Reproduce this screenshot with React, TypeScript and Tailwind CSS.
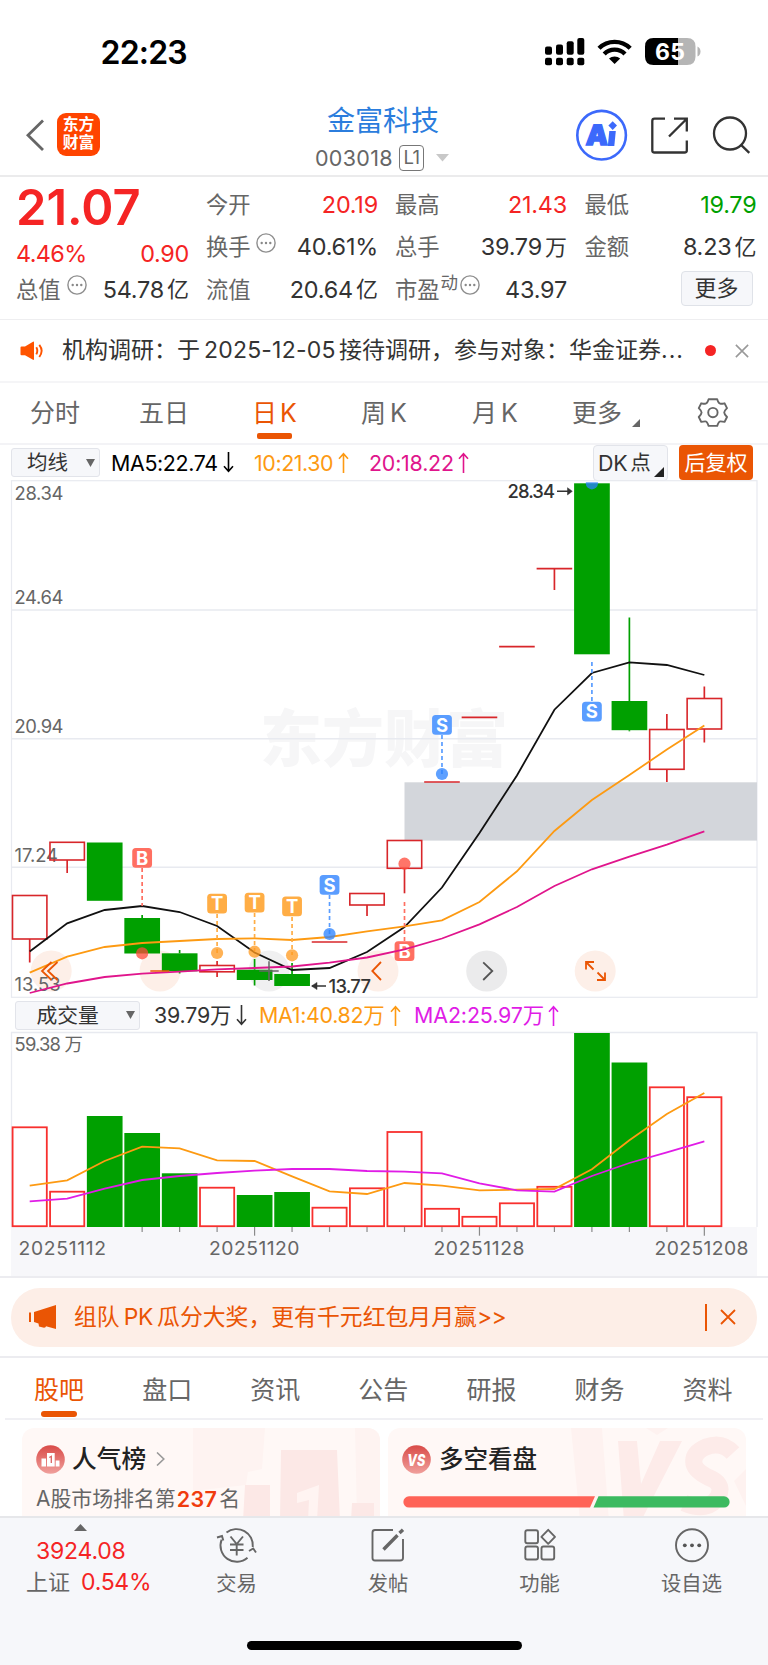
import type { ReactNode } from "react";

const step = 37.48;
const cx = (i: number) => 29.7 + step * i;

type Candle = { up: boolean; top: number; bottom: number; high?: number; low?: number };

const candles: Candle[] = [
  { up: true, top: 895.5, bottom: 939, low: 962.5 },
  { up: true, top: 842.3, bottom: 860, low: 873 },
  { up: false, top: 842.5, bottom: 900.8 },
  { up: false, top: 918, bottom: 953.5, high: 915 },
  { up: false, top: 953.3, bottom: 971.3, high: 950, low: 973.5 },
  { up: true, top: 965.5, bottom: 971.8, high: 961, low: 977 },
  { up: false, top: 969.7, bottom: 980, high: 959, low: 985.5 },
  { up: false, top: 974, bottom: 986, high: 963 },
  { up: true, top: 942, bottom: 942 },
  { up: true, top: 893.5, bottom: 905, low: 916 },
  { up: true, top: 840.5, bottom: 868.3, low: 893.3 },
  { up: true, top: 782, bottom: 782 },
  { up: true, top: 717.3, bottom: 717.3 },
  { up: true, top: 646.7, bottom: 646.7 },
  { up: true, top: 568.7, bottom: 568.7, low: 590 },
  { up: false, top: 483.3, bottom: 654.3 },
  { up: false, top: 701, bottom: 730.2, high: 617.5, low: 731.3 },
  { up: true, top: 729.5, bottom: 769.3, high: 714, low: 782 },
  { up: true, top: 698.5, bottom: 729, high: 686.5, low: 742.5 },
];

const ma5 = [951.5, 923.3, 910, 906, 912, 926, 952.5, 970, 968, 952, 927, 887.5, 833, 775.5, 709.7, 673, 662.3, 665, 675];
const ma10 = [972.7, 956.7, 947, 943, 941, 939, 938.3, 940, 937, 931.3, 926.3, 920.3, 902, 871.3, 831, 800, 775, 749.5, 725.5];
const ma20 = [993, 983.5, 977, 973.7, 971.7, 969.3, 968, 966.5, 962.7, 957.5, 949.3, 938.5, 924.3, 907, 886, 869.3, 856.7, 844.7, 831.3];

const volumes: { up: boolean; top: number }[] = [
  { up: true, top: 1127.3 },
  { up: true, top: 1191.7 },
  { up: false, top: 1116 },
  { up: false, top: 1133 },
  { up: false, top: 1173.3 },
  { up: true, top: 1187.7 },
  { up: false, top: 1195 },
  { up: false, top: 1192 },
  { up: true, top: 1207.7 },
  { up: true, top: 1188.3 },
  { up: true, top: 1132 },
  { up: true, top: 1208.8 },
  { up: true, top: 1216.8 },
  { up: true, top: 1203.3 },
  { up: true, top: 1186.8 },
  { up: false, top: 1033 },
  { up: false, top: 1062.5 },
  { up: true, top: 1087.3 },
  { up: true, top: 1097.2 },
];
const vma1 = [1185.7, 1180.3, 1161, 1146.7, 1148.3, 1160.3, 1161, 1176.3, 1191.3, 1194, 1183, 1185.7, 1190.3, 1189.7, 1189, 1169.3, 1140.3, 1114, 1093];
const vma2 = [1201.3, 1198.7, 1188.7, 1180, 1176, 1173, 1170.7, 1169, 1169, 1171, 1171.7, 1173.3, 1183.3, 1190.3, 1191.7, 1176, 1163, 1152.3, 1141.3];

const points = (ys: number[]) => ys.map((y, i) => `${cx(i)},${y}`).join(" ");

type Mark = { i: number; letter: string; color: string; box: number; from: number; to: number; dot: number };
const RED = "#ff6f61";
const BLUE = "#5a9dff";
const AMBER = "#ffad45";
const marks: Mark[] = [
  { i: 3, letter: "B", color: RED, box: 848, from: 868, to: 906, dot: 953.3 },
  { i: 5, letter: "T", color: AMBER, box: 893.8, from: 914, to: 953, dot: 953 },
  { i: 6, letter: "T", color: AMBER, box: 892.7, from: 913, to: 951.5, dot: 951.7 },
  { i: 7, letter: "T", color: AMBER, box: 896.5, from: 917, to: 955, dot: 955.3 },
  { i: 8, letter: "S", color: BLUE, box: 875, from: 895, to: 934, dot: 934 },
  { i: 11, letter: "S", color: BLUE, box: 715, from: 735, to: 774, dot: 774 },
  { i: 15, letter: "S", color: BLUE, box: 701.7, from: 662, to: 701, dot: 483.3 },
  { i: 10, letter: "B", color: RED, box: 941.3, from: 902, to: 941, dot: 863.7 },
];

function PriceChart() {
  return (
    <svg className="block h-[520px] w-[768px] shrink-0" viewBox="0 480 768 520">
      <defs>
        <clipPath id="plot">
          <rect x="12" y="482.3" width="745" height="515" />
        </clipPath>
      </defs>
      <text x="260" y="762" fontSize="62" fontWeight="900" fill="#f6f6f7" textLength="248">东方财富</text>
      <g stroke="#e8eaf0" strokeWidth="1.5" fill="none">
        <rect x="11.5" y="480.7" width="745.5" height="516.6" strokeWidth="1.2" />
        <path d="M12 610H757M12 738.7H757M12 867.3H757" />
      </g>
      <rect x="404.5" y="782.3" width="352.5" height="58.3" fill="#d3d6db" />
      <g fill="#fdefe8">
        <circle cx="51.2" cy="971" r="20.5" />
        <circle cx="160" cy="971" r="20.5" />
        <circle cx="378" cy="971" r="20.5" />
        <circle cx="595.2" cy="971" r="20.5" />
      </g>
      <g fill="#ebebec">
        <circle cx="269" cy="971" r="20.5" fill="#f0f0f1" />
        <circle cx="486.7" cy="971" r="20.5" />
      </g>
      <g fill="#666" fontSize="18.4">
        <text x="14.5" y="500" textLength="49">28.34</text>
        <text x="14.5" y="604.2" textLength="49">24.64</text>
        <text x="14.5" y="733.2" textLength="49">20.94</text>
        <text x="14.5" y="862" textLength="43.5">17.24</text>
        <text x="14.5" y="991.2" textLength="46">13.53</text>
      </g>
      {candles.map((c, i) => {
        const color = c.up ? "#d8262a" : "#00a000";
        return (
          <g key={i} stroke={color} strokeWidth="1.7">
            {c.high !== undefined && <line x1={cx(i)} x2={cx(i)} y1={c.high} y2={c.top} />}
            {c.low !== undefined && <line x1={cx(i)} x2={cx(i)} y1={c.bottom} y2={c.low} />}
            {c.top === c.bottom ? (
              <line x1={cx(i) - 17.8} x2={cx(i) + 17.8} y1={c.top} y2={c.top} />
            ) : c.up ? (
              <rect x={cx(i) - 17.2} y={c.top} width="34.4" height={c.bottom - c.top} fill="none" strokeWidth="1.6" />
            ) : (
              <rect x={cx(i) - 17.8} y={c.top} width="35.7" height={c.bottom - c.top} fill={color} stroke="none" />
            )}
          </g>
        );
      })}
      <g fill="none" strokeWidth="1.8">
        <polyline points={points(ma5)} stroke="#111" />
        <polyline points={points(ma10)} stroke="#fd9a12" />
      </g>
      <g clipPath="url(#plot)">
        {marks.map((m) => (
          <g key={m.i}>
            <line x1={cx(m.i)} x2={cx(m.i)} y1={m.from} y2={m.to} stroke={m.color} strokeWidth="1.7" strokeDasharray="4 3" />
            <circle cx={cx(m.i)} cy={m.dot} r="6.1" fill={m.letter === "S" ? "#2b82ff" : m.letter === "T" ? "#ff9a1f" : "#ff4a3a"} opacity="0.76" />
            <rect x={cx(m.i) - 9.9} y={m.box} width="19.8" height="19.8" rx="3.5" fill={m.color} />
            <text x={cx(m.i)} y={m.box + 16.6} fontSize="18.5" fontWeight="700" fill="#fff" textAnchor="middle">
              {m.letter}
            </text>
          </g>
        ))}
      </g>
      <polyline points={points(ma20)} stroke="#e0158c" fill="none" strokeWidth="1.8" />
      <g fill="#333" fontSize="18.4" fontWeight="500">
        <text x="507.5" y="498.2" textLength="47.5">28.34</text>
        <text x="328.5" y="992.5" textLength="42.5">13.77</text>
      </g>
      <g fill="none" stroke="#333" strokeWidth="1.6">
        <path d="M557 491.3H571M312 986H326" />
        <path d="M567.5 487.7L572.3 491.3L567.5 494.9ZM317 982.4L311.5 986L317 989.6Z" fill="#333" strokeWidth="0.5" />
      </g>
      <g fill="none" stroke="#ea5504" strokeWidth="1.8">
        <path d="M51.5 962L42 971L51.5 980M57.5 962L48 971L57.5 980" />
        <path d="M150.3 971H169.3" strokeWidth="1.5" />
        <path d="M381 962L372.3 971L381 980" />
        <path d="M586 969.5V962H594M586 962L593.5 969.5M605 972.5V980H597M605 980L597.5 972.5" />
      </g>
      <path d="M259.3 971H278.7M269 961.3V981" stroke="#666" strokeWidth="1.5" fill="none" />
      <path d="M483.2 962.3L492.3 971L483.2 980" stroke="#555" strokeWidth="1.8" fill="none" />
    </svg>
  );
}

function VolumeChart() {
  return (
    <svg className="block h-[245px] w-[768px] shrink-0" viewBox="0 1031 768 245">
      <rect x="11" y="1227" width="746" height="50" fill="#f7f7fa" />
      <path d="M11.5 1227V1032.5H757V1227" stroke="#e8eaf0" strokeWidth="1.3" fill="none" />
      <text x="14.5" y="1050.5" fontSize="18.4" fill="#666" textLength="68.5">59.38 万</text>
      {volumes.map((v, i) =>
        v.up ? (
          <rect key={i} x={cx(i) - 17.1} y={v.top} width="34.2" height={1226.2 - v.top} fill="#fff" stroke="#f8302e" strokeWidth="1.8" />
        ) : (
          <rect key={i} x={cx(i) - 17.8} y={v.top} width="35.7" height={1227 - v.top} fill="#00a000" />
        ),
      )}
      <g fill="none" strokeWidth="1.8">
        <polyline points={points(vma1)} stroke="#fd9a12" />
        <polyline points={points(vma2)} stroke="#e01ce6" />
      </g>
      {volumes.map((_, i) =>
        i > 2 ? (
          <line key={i} x1={cx(i)} x2={cx(i)} y1="1227" y2={i % 6 === 0 ? 1235.7 : 1232} stroke="#8a8a8a" strokeWidth="1.2" />
        ) : null,
      )}
      <g fill="#666" fontSize="19.3">
        <text x="18.5" y="1255.3" textLength="87.5">20251112</text>
        <text x="209" y="1255.3" textLength="90.5">20251120</text>
        <text x="433.5" y="1255.3" textLength="91">20251128</text>
        <text x="654.5" y="1255.3" textLength="94">20251208</text>
      </g>
    </svg>
  );
}

function Dots() {
  return (
    <svg className="block size-5 shrink-0" viewBox="0 0 20 20">
      <circle cx="10" cy="10" r="9.1" fill="none" stroke="#8e8e8e" strokeWidth="1.4" />
      <g fill="#888">
        <circle cx="5.7" cy="10" r="1.2" />
        <circle cx="10" cy="10" r="1.2" />
        <circle cx="14.3" cy="10" r="1.2" />
      </g>
    </svg>
  );
}

function Cross({ className }: { className: string }) {
  return (
    <svg className={className} viewBox="0 0 16 16">
      <path d="M1 1L15 15M15 1L1 15" stroke="currentColor" strokeWidth="1.8" fill="none" />
    </svg>
  );
}

function Field({ label, extra, children, color = "text-[#333]" }: { label: string; extra?: ReactNode; children: ReactNode; color?: string }) {
  return (
    <div className="flex h-full items-center whitespace-nowrap">
      <span className="text-[22.3px] text-[#666]">{label}</span>
      {extra}
      <span className={`ml-auto flex items-center gap-[3px] text-[23.4px] tracking-[-0.2px] ${color}`}>{children}</span>
    </div>
  );
}

const Cn = ({ children }: { children: ReactNode }) => <span className="text-[22px] tracking-normal">{children}</span>;

function StatusBar() {
  return (
    <div className="flex h-[96px] items-start">
      <div className="ml-[100.5px] mt-[33px] w-[444.5px] text-[32px] font-semibold leading-[40px] tracking-[-0.8px] text-black">22:23</div>
      <svg className="mt-[36px] h-[32px] w-[160px]" viewBox="545 36 160 32">
        <g fill="#000">
          <rect x="545" y="46.5" width="7" height="8.2" rx="2" />
          <rect x="556" y="44.5" width="7" height="10.2" rx="2" />
          <rect x="566.7" y="41.3" width="7" height="13.4" rx="2" />
          <rect x="577.3" y="38" width="7" height="16.7" rx="2" />
          <rect x="545" y="57.7" width="7" height="7.5" rx="2" />
          <rect x="556" y="57.7" width="7" height="7.5" rx="2" />
          <rect x="566.7" y="57.7" width="7" height="7.5" rx="2" />
          <rect x="577.3" y="57.7" width="7" height="7.5" rx="2" />
          <path d="M614.6 64L620.2 58.6A8.2 8.2 0 0 0 609 58.6Z" />
        </g>
        <path d="M599 48.2A22.3 22.3 0 0 1 630.2 48.2M604.2 54A14.6 14.6 0 0 1 625 54" fill="none" stroke="#000" strokeWidth="4.4" />
        <path d="M697.5 46.5Q700.5 48 700.5 51.5T697.5 56.5Z" fill="#b5b5b5" />
        <path d="M678 38H687Q695.5 38 695.5 46.5V56.5Q695.5 65 687 65H678Z" fill="#b5b5b5" />
        <path d="M678 38H653.5Q645 38 645 46.5V56.5Q645 65 653.5 65H678Z" fill="#000" />
        <text x="655" y="60" fontSize="23" fontWeight="700" fill="#fff" textLength="30">65</text>
      </svg>
    </div>
  );
}

function NavBar() {
  return (
    <div className="flex h-[81px] items-start border-b-2 border-[#ebebec]">
      <svg className="ml-[24px] mt-[22px] h-[34px] w-[22px]" viewBox="0 0 22 34">
        <path d="M19 2.5L4 17.2L19 32" fill="none" stroke="#666" strokeWidth="2.8" />
      </svg>
      <div className="ml-[11px] mt-[17px] flex size-[43px] flex-col items-center justify-center rounded-[9px] bg-[#ff4400] text-[15.8px] font-bold leading-[18px] text-white">
        <span>东方</span>
        <span>财富</span>
      </div>
      <div className="ml-[207px] flex w-[152px] flex-col items-center pt-[9px]">
        <div className="text-[28px] leading-[32px] text-[#2b7ddd]">金富科技</div>
        <div className="mt-[8px] flex h-[27px] w-[136px] items-center">
          <span className="w-[84px] text-[21.5px] tracking-[0.3px] text-[#666]">003018</span>
          <span className="flex h-[26px] w-[25px] items-center justify-center rounded-[4px] border-[1.5px] border-[#777] text-[18.5px] tracking-[-0.5px] text-[#666]">L1</span>
          <svg className="ml-[12px] h-[8px] w-[13px]" viewBox="0 0 13 8">
            <path d="M0 0H13L6.5 7.5Z" fill="#c8c8c8" />
          </svg>
        </div>
      </div>
      <svg className="ml-[115px] mt-[13px] h-[52px] w-[184px] shrink-0" viewBox="574 109 184 52">
        <circle cx="601.6" cy="135.2" r="24.3" fill="none" stroke="#3c69fb" strokeWidth="2.6" />
        <text x="585.5" y="145.3" fontSize="28" fontWeight="900" fill="#3c69fb" stroke="#3c69fb" strokeWidth="1.4" transform="skewX(-3) translate(7.6 0)">A</text>
        <path d="M609.3 131H615.8L614.3 146H607.8Z" fill="#3c69fb" />
        <path d="M612.7 121.3L617 125.6L612.7 129.9L608.4 125.6Z" fill="#3c69fb" />
        <g fill="none" stroke="#333" strokeWidth="2.3">
          <path d="M665 118.7H654.5Q652.3 118.7 652.3 121V150.5Q652.3 152.5 654.5 152.5H684.5Q686.8 152.5 686.8 150.5V140.5" />
          <path d="M674 118.7H686.8V131.5M686.8 118.7L669 136.5" />
          <circle cx="730" cy="133.5" r="16" />
          <path d="M741 144.8L749.3 152.8" />
        </g>
      </svg>
    </div>
  );
}

function Quote() {
  return (
    <div className="flex h-[144px] border-b border-[#eeeef0] pl-[16px]">
      <div className="w-[173px]">
        <div className="mt-[3px] h-[55px] text-[48.8px] font-semibold leading-[55px] text-[#f52424]">21.07</div>
        <div className="mt-[3px] flex h-[32px] items-center justify-between text-[23.4px] text-[#f52424]">
          <span className="tracking-[-0.6px]">4.46%</span>
          <span className="tracking-[-0.3px]">0.90</span>
        </div>
        <div className="mt-[2px] h-[36px]">
          <Field label="总值" extra={<span className="-mt-[9px] ml-[6px]"><Dots /></span>}>
            <span>54.78</span>
            <Cn>亿</Cn>
          </Field>
        </div>
      </div>
      <div className="ml-[17px] grid w-[172px] grid-rows-[42px_43px_42px] pt-[7px]">
        <Field label="今开" color="text-[#f52424]">20.19</Field>
        <Field label="换手" extra={<span className="-mt-[9px] ml-[5px]"><Dots /></span>}>40.61%</Field>
        <Field label="流值">
          <span>20.64</span>
          <Cn>亿</Cn>
        </Field>
      </div>
      <div className="ml-[17px] grid w-[172px] grid-rows-[42px_43px_42px] pt-[7px]">
        <Field label="最高" color="text-[#f52424]">21.43</Field>
        <Field label="总手">
          <span>39.79</span>
          <Cn>万</Cn>
        </Field>
        <Field
          label="市盈"
          extra={
            <span className="flex items-center gap-[2px] pl-px text-[17.5px] text-[#666]">
              <span className="-mt-[13px]">动</span>
              <span className="-mt-[9px]">
                <Dots />
              </span>
            </span>
          }
        >
          43.97
        </Field>
      </div>
      <div className="ml-[17.5px] grid w-[172px] grid-rows-[42px_43px_42px] pt-[7px]">
        <Field label="最低" color="text-[#00a000]">19.79</Field>
        <Field label="金额">
          <span>8.23</span>
          <Cn>亿</Cn>
        </Field>
        <div className="flex h-[40px] items-center justify-end pr-[4px]">
          <span className="flex h-[35px] w-[72px] items-center justify-center rounded-[4px] border border-[#dfe2e8] bg-[#f6f7fa] text-[22px] text-[#333]">更多</span>
        </div>
      </div>
    </div>
  );
}

function Notice() {
  return (
    <div className="flex h-[63px] items-center border-b-2 border-[#f5f5f7] text-[23px] text-[#333]">
      <svg className="ml-[20px] h-[20px] w-[24px]" viewBox="0 0 24 20">
        <path d="M0.5 6.5Q0.5 5.5 1.5 5.5H5L13 0.7Q14 0.3 14 1.5V18Q14 19.3 13 18.8L5 14.2H1.5Q0.5 14.2 0.5 13.2Z" fill="#ff5400" />
        <path d="M16.3 6.2Q18.3 9.8 16.3 13.4M19.3 3.8Q24 9.8 19.3 16" stroke="#ff5400" strokeWidth="1.9" fill="none" />
      </svg>
      <div className="ml-[18px] flex w-[643px] items-center whitespace-nowrap">
        机构调研：于
        <span className="ml-[4px] mr-[3px] w-[132px] tracking-[0.2px]">2025-12-05</span>
        接待调研，参与对象：华金证券
        <span className="tracking-[1px]">...</span>
      </div>
      <span className="size-[11px] rounded-full bg-[#f52424]" />
      <Cross className="ml-[19px] size-[14px] text-[#999]" />
    </div>
  );
}

function PeriodTabs() {
  return (
    <div className="flex h-[62px] items-start border-b-2 border-[#f3f3f6] pt-[12px] text-[25px] leading-[37px] text-[#666]">
      <span className="ml-[30px] w-[109px]">分时</span>
      <span className="w-[113px]">五日</span>
      <span className="flex w-[109px] flex-col items-start text-[#ea5504]">
        <span className="flex gap-[3px]">
          日<span>K</span>
        </span>
        <span className="ml-[5px] mt-px h-[6px] w-[35px] rounded-[2px] bg-[#ea5504]" />
      </span>
      <span className="flex w-[111px] gap-[4px]">
        周<span>K</span>
      </span>
      <span className="flex w-[100px] gap-[4px]">
        月<span>K</span>
      </span>
      <span className="flex w-[125px]">
        更多
        <svg className="ml-[10px] mt-[24px] size-[8px]" viewBox="0 0 8 8">
          <path d="M8 0V8H0Z" fill="#666" />
        </svg>
      </span>
      <svg className="mt-[2px] h-[30px] w-[31px]" viewBox="697 397 31 30">
        <path
          d="M708.6 399.3H717.2Q718.6 403.8 720.6 403.8Q722.5 403.8 724.6 403.3L727 408.2Q724.2 411 724.2 412.6T727 417L724.6 421.9Q722.5 421.4 720.6 421.4Q718.6 421.4 717.2 425.9H708.6Q707.2 421.4 705.2 421.4Q703.3 421.4 701.2 421.9L698.8 417Q701.6 414.2 701.6 412.6T698.8 408.2L701.2 403.3Q703.3 403.8 705.2 403.8Q707.2 403.8 708.6 399.3Z"
          fill="none"
          stroke="#666"
          strokeWidth="1.9"
          strokeLinejoin="round"
        />
        <circle cx="712.9" cy="412.6" r="4.7" fill="none" stroke="#666" strokeWidth="1.9" />
      </svg>
    </div>
  );
}

function Arrow({ up = false }: { up?: boolean }) {
  return (
    <svg className="h-[21px] w-[11px] shrink-0" viewBox="0 0 11 21">
      <path d={up ? "M5.5 21V1.5M1 6.8L5.5 1.8L10 6.8" : "M5.5 0V19.5M1 14.2L5.5 19.2L10 14.2"} fill="none" stroke="currentColor" strokeWidth="1.6" />
    </svg>
  );
}

function Caret() {
  return (
    <svg className="h-[8px] w-[9px]" viewBox="0 0 9 8">
      <path d="M0 0H9L4.5 8Z" fill="#666" />
    </svg>
  );
}

function MaRow() {
  return (
    <div className="flex h-[36px] items-center whitespace-nowrap text-[21.4px]">
      <div className="ml-[11px] flex h-[29px] w-[89px] items-center rounded-[3px] border border-[#e2e4ea] bg-[#f6f7fa] pl-[15px] text-[20.5px] text-[#333]">
        <span className="w-[59px]">均线</span>
        <Caret />
      </div>
      <div className="ml-[11px] flex w-[143px] items-center text-black">
        <span className="w-[112px] tracking-[-0.35px]">MA5:22.74</span>
        <Arrow />
      </div>
      <div className="flex w-[115px] items-center text-[#fd9a12]">
        <span className="w-[84px] tracking-[-0.4px]">10:21.30</span>
        <Arrow up />
      </div>
      <div className="flex w-[224px] items-center text-[#e0158c]">
        <span className="w-[89px] tracking-[-0.2px]">20:18.22</span>
        <Arrow up />
      </div>
      <div className="flex h-[36px] w-[75px] items-center gap-[3px] rounded-[4px] border border-[#e2e4ea] bg-[#f6f7fa] pl-[4px] text-[#333]">
        <span className="tracking-[-0.3px]">DK</span>
        <span className="text-[20.5px]">点</span>
        <svg className="mt-[18px] size-[10px] shrink-0" viewBox="0 0 10 10">
          <path d="M10 0V10H0Z" fill="#222" />
        </svg>
      </div>
      <div className="ml-[11px] flex h-[35px] w-[74px] items-center justify-center rounded-[4px] bg-[#ea5504] text-[21px] text-white">后复权</div>
    </div>
  );
}

function VolumeRow() {
  return (
    <div className="flex h-[31px] items-center whitespace-nowrap text-[21.4px]">
      <div className="ml-[15px] flex h-[29px] w-[125px] items-center rounded-[3px] border border-[#e2e4ea] bg-[#f6f7fa] pl-[20.5px] text-[20.8px] text-[#333]">
        <span className="w-[89.5px]">成交量</span>
        <Caret />
      </div>
      <div className="ml-[14px] flex w-[105px] items-center text-[#333]">
        <span className="w-[82px] tracking-[-0.2px]">39.79万</span>
        <Arrow />
      </div>
      <div className="flex w-[155px] items-center text-[#fd9a12]">
        <span className="w-[131px] tracking-[-0.3px]">MA1:40.82万</span>
        <Arrow up />
      </div>
      <div className="flex items-center text-[#e01ce6]">
        <span className="w-[134px] tracking-[-0.1px]">MA2:25.97万</span>
        <Arrow up />
      </div>
    </div>
  );
}

function Banner() {
  return (
    <div className="h-[82px] border-b-2 border-t-2 border-[#ececf0] pl-[11px] pr-[11px] pt-[10px]">
      <div className="flex h-[59px] items-center whitespace-nowrap rounded-[29px] bg-[#fdeee7] text-[22.85px] text-[#ea5504]">
        <svg className="ml-[18px] h-[26px] w-[28px]" viewBox="0 0 28 26">
          <path d="M0 8.5H2V18H0ZM5 8L27 1V25L17 22.3Q17 24 14 23.6L10 22.5L9.5 19.5L5 18Z" fill="#ea5504" />
        </svg>
        <div className="ml-[17px] flex w-[631px] items-center">
          组队<span className="ml-[4px] mr-[4px] tracking-[-0.3px]">PK</span>瓜分大奖，更有千元红包月月赢<span className="tracking-[-0.5px]">&gt;&gt;</span>
        </div>
        <span className="h-[27px] w-[1.5px] bg-[#ea5504]" />
        <Cross className="ml-[13px] size-[16px]" />
      </div>
    </div>
  );
}

function SectionTabs() {
  const tabs = ["股吧", "盘口", "资讯", "公告", "研报", "财务", "资料"];
  return (
    <div className="mx-[5px] flex h-[62px] border-b-2 border-[#f0f0f4]">
      {tabs.map((t, i) => (
        <div key={t} className={`flex w-[108.1px] shrink-0 flex-col items-center pt-[14px] text-[25px] leading-[37px] ${i === 0 ? "text-[#ea5504]" : "text-[#666]"}`}>
          {t}
          {i === 0 && <span className="mt-[2px] h-[6px] w-[36px] rounded-full bg-[#ea5504]" />}
        </div>
      ))}
    </div>
  );
}

function Cards() {
  return (
    <div className="flex h-[97px] gap-[8px] overflow-hidden pl-[22px] pt-[8px]">
      <div className="relative h-[120px] w-[358px] overflow-hidden rounded-[12px] bg-[#fff8f6] pl-[14px]">
        <svg className="absolute right-0 top-0 h-[120px] w-[187px]" viewBox="193 1427 187 120">
          <path d="M193 1427H265L262 1468L248 1471L246 1484L193 1490Z" fill="#fef3f1" />
          <path d="M355 1427H380V1520H357Z" fill="#fef3f1" />
          <path d="M281 1449H337L340 1520H280ZM245 1484H270V1520H243ZM352 1502H374V1520H351Z" fill="#fce8e6" />
          <path d="M297 1492L319 1484L317 1520H308L309 1499L297 1502Z" fill="#fff4f2" />
        </svg>
        <div className="relative flex h-[63px] items-center">
          <svg className="size-[29px]" viewBox="0 0 29 29">
            <defs>
              <linearGradient id="badge" x1="0" y1="0" x2="0" y2="1">
                <stop offset="0" stopColor="#d94b48" />
                <stop offset="1" stopColor="#f0a09c" />
              </linearGradient>
            </defs>
            <circle cx="14.5" cy="14.5" r="14.3" fill="url(#badge)" />
            <path d="M5.5 13.5H10V21.5H5.5ZM19.7 15.5H23.5V21.5H19.7ZM11 8H18.7V21.5H11Z" fill="#fff" />
            <path d="M13.3 12.5L15.3 11.3V18" stroke="#dc6260" strokeWidth="1.3" fill="none" />
          </svg>
          <span className="ml-[7px] mt-[1px] text-[24.7px] font-medium text-[#222]">人气榜</span>
          <svg className="ml-[10px] h-[14px] w-[9px]" viewBox="0 0 9 14">
            <path d="M1 0.5L7.8 7L1 13.5" stroke="#999" strokeWidth="1.6" fill="none" />
          </svg>
        </div>
        <div className="relative flex h-[17px] items-center whitespace-nowrap text-[20.9px] text-[#666]">
          A股市场排名第<span className="ml-px mr-[2px] text-[21.5px] font-semibold tracking-[0.3px] text-[#f03c0e]">237</span>名
        </div>
      </div>
      <div className="relative h-[120px] w-[358px] overflow-hidden rounded-[12px] bg-[#fff8f6] pl-[14px]">
        <svg className="absolute right-0 top-0 h-[120px] w-[187px]" viewBox="559 1427 187 120">
          <path d="M571 1427H602L609 1520H580ZM646 1427H668L657 1434ZM734 1480L746 1468V1505Z" fill="#fef2f0" />
          <path d="M618 1440H637L641 1483L660 1440H682L641 1520H624Z" fill="#fdebe9" />
          <path d="M733 1452Q722 1440 706 1446Q692 1452 694 1463Q696 1471 712 1478Q724 1484 718 1496Q708 1512 684 1502" stroke="#fdebe9" strokeWidth="17" fill="none" />
        </svg>
        <div className="relative flex h-[63px] items-center">
          <svg className="size-[29px]" viewBox="0 0 29 29">
            <circle cx="14.5" cy="14.5" r="14.3" fill="url(#badge)" />
            <text x="14.2" y="20.5" fontSize="16.5" fontWeight="800" fontStyle="italic" fill="#fff" textAnchor="middle" textLength="18" lengthAdjust="spacingAndGlyphs">VS</text>
          </svg>
          <span className="ml-[8px] mt-[1px] text-[24.5px] font-medium text-[#222]">多空看盘</span>
        </div>
        <svg className="relative ml-[1px] mt-[5px] block h-[12px] w-[327px]" viewBox="0 0 327 12">
          <path d="M6 0.3H192L187 11.6H6A5.6 5.6 0 0 1 6 0.3Z" fill="#ff6357" />
          <path d="M195.5 0.3H321A5.6 5.6 0 0 1 321 11.6H190.5Z" fill="#3cba60" />
        </svg>
      </div>
    </div>
  );
}

function NavItem({ label, children, className }: { label: string; children: ReactNode; className: string }) {
  return (
    <div className={`flex flex-col items-center pt-[8px] ${className}`}>
      <svg className="h-[40px] w-[44px]" viewBox="0 0 44 40" fill="none" stroke="#666" strokeWidth="1.9">
        {children}
      </svg>
      <span className="mt-[4px] text-[20.3px] leading-[28px] text-[#666]">{label}</span>
    </div>
  );
}

function BottomBar() {
  return (
    <div className="flex h-[149px] flex-col border-t-2 border-[#e6e7ea] bg-[#f6f7fa]">
      <div className="flex h-[108px]">
        <div className="flex w-[160px] flex-col pl-[26px]">
          <svg className="ml-[48px] mt-[6px] h-[7px] w-[13px]" viewBox="0 0 13 7">
            <path d="M6.5 0L13 7H0Z" fill="#666" />
          </svg>
          <span className="ml-[10px] mt-[3px] text-[23px] leading-[34px] tracking-[-0.2px] text-[#f52424]">3924.08</span>
          <span className="mt-[-1px] flex text-[22px] leading-[31px] text-[#666]">
            上证<span className="ml-[11px] text-[23px] tracking-[-0.3px] text-[#f52424]">0.54%</span>
          </span>
        </div>
        <NavItem label="交易" className="w-[153px]">
          <path d="M11.5 6.6A16.3 16.3 0 0 1 37.8 21M32.5 31.8A16.3 16.3 0 0 1 6.6 13.6" />
          <path d="M2 11.5L7 10L8.3 14.5M34 25L38.2 22.5L41 26.5" />
          <path d="M15.5 10.5L21.7 18L28 10.5M15 18.5H28.5M15 24H28.5M21.7 18V29.5" />
        </NavItem>
        <NavItem label="发帖" className="w-[150px]">
          <path d="M27 4H9Q6.5 4 6.5 6.5V32Q6.5 34.5 9 34.5H34Q37 34.5 37 32V13" />
          <path d="M17.5 23.5L31.5 9.3M33.5 7L37 3.8" strokeWidth="3.4" />
        </NavItem>
        <NavItem label="功能" className="w-[153px]">
          <rect x="7.3" y="4.3" width="12.7" height="13" rx="2" />
          <rect x="7.3" y="20.5" width="12.7" height="13" rx="2" />
          <rect x="23.5" y="20.5" width="12.7" height="13" rx="2" />
          <path d="M30.2 3.8L37 10.8L30.2 17.8L23.4 10.8Z" strokeLinejoin="round" />
        </NavItem>
        <NavItem label="设自选" className="w-[151px]">
          <circle cx="22" cy="19.3" r="16" />
          <g fill="#555" stroke="none">
            <circle cx="14.8" cy="19.3" r="1.9" />
            <circle cx="22" cy="19.3" r="1.9" />
            <circle cx="29.2" cy="19.3" r="1.9" />
          </g>
        </NavItem>
      </div>
      <div className="mx-auto mt-[15px] h-[9px] w-[275px] rounded-full bg-black" />
    </div>
  );
}

export default function App() {
  return (
    <div className="flex h-[1665px] w-[768px] flex-col overflow-hidden bg-white font-['Inter','Noto_Sans_CJK_SC',sans-serif]">
      <StatusBar />
      <NavBar />
      <Quote />
      <Notice />
      <PeriodTabs />
      <MaRow />
      <div className="-mt-px h-[520px]">
        <PriceChart />
      </div>
      <VolumeRow />
      <VolumeChart />
      <Banner />
      <SectionTabs />
      <Cards />
      <BottomBar />
    </div>
  );
}
